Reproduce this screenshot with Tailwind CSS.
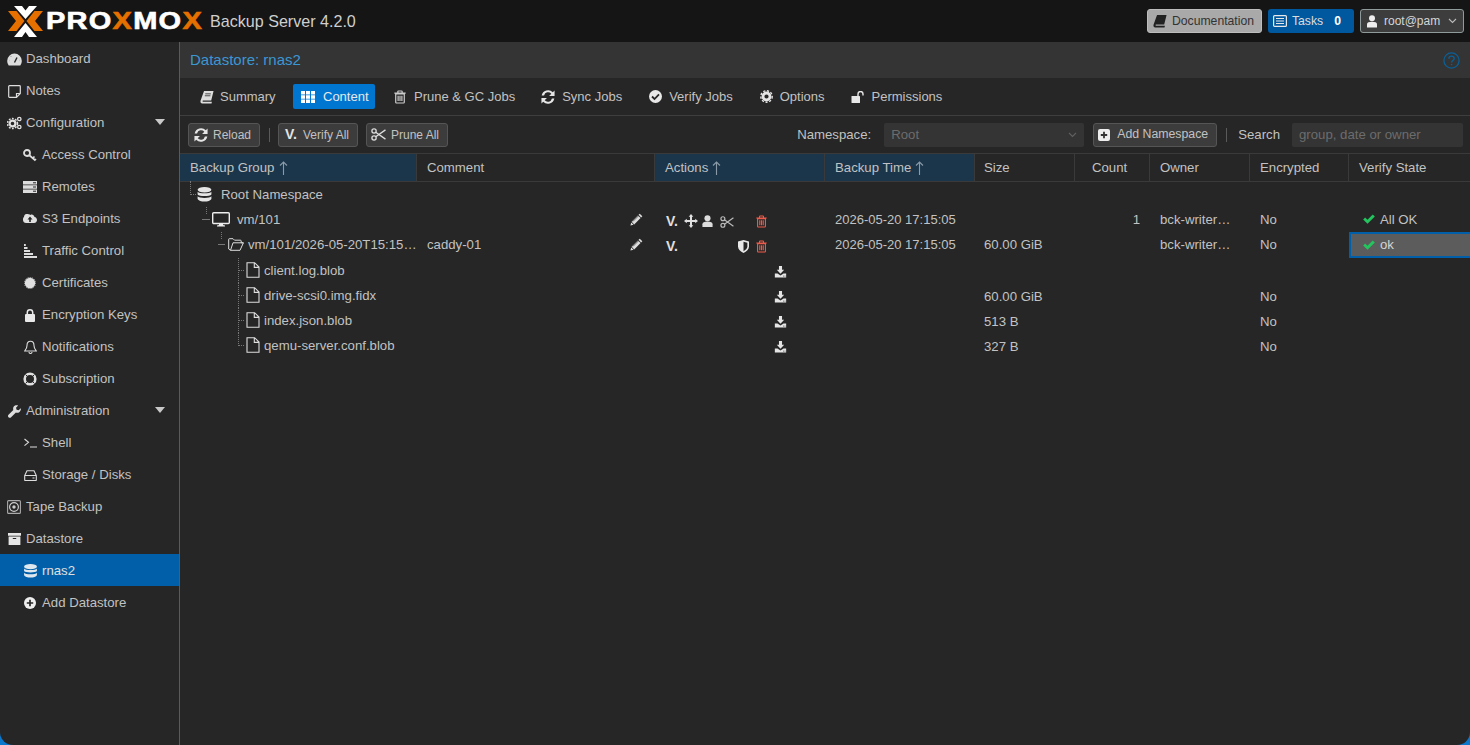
<!DOCTYPE html>
<html lang="en">
<head>
<meta charset="UTF-8">
<title>Proxmox Backup Server</title>
<script src="https://cdn.jsdelivr.net/npm/@tailwindcss/browser@4"></script>
</head>
<body class="bg-[#0a78cc] font-['Liberation_Sans',Arial,sans-serif] text-[13.2px] text-[#c2c2c2] antialiased overflow-hidden">
<svg class="hidden">
  <symbol id="sync" viewBox="1.8 1.6 12.4 12.8"><path d="M2.200 6.600A6 6 0 0 1 12.400 3.600L14 2v5H9l2-2a3.800 3.800 0 0 0-6.600 1.600zM13.800 9.400A6 6 0 0 1 3.600 12.400L2 14V9h5l-2 2a3.800 3.800 0 0 0 6.600-1.600z" fill="currentColor"/></symbol>
  <symbol id="book" viewBox="0 0 16 16"><path d="M4.600 1H15.500l-2.700 11.100H3.600c-1 0-1.100 1.400 0 1.400h10l-.4 1.800H2.600C1 15.300.2 13.800.6 12.200z" fill="currentColor"/><path d="M6 4.400h6.400M5.500 6.600h6.400" stroke="#262626" stroke-width=".9"/></symbol>
  <symbol id="trash" viewBox="0 0 14 16"><path d="M2 4.500h10V14a1 1 0 0 1-1 1H3a1 1 0 0 1-1-1zM.4 3.500h13.200M4.500 3.300V1.600c0-.4.3-.6.6-.6h3.800c.3 0 .6.200.6.600v1.700M4.800 6.500v6.300M7 6.500v6.300M9.200 6.500v6.300" fill="none" stroke="currentColor" stroke-width="1.400"/></symbol>
  <symbol id="scissors" viewBox="0 0 16 14"><g fill="none" stroke="currentColor" stroke-width="1.400"><circle cx="3.200" cy="3.200" r="2.300"/><circle cx="3.200" cy="10.800" r="2.300"/><path d="M5 4.500 15.500 12M5 9.500 15.500 2"/></g></symbol>
  <symbol id="pencil" viewBox="0 0 16 16"><path d="M12 .8 15.200 4l-1.500 1.500-3.200-3.200zM9.800 3 13 6.200 5.200 14 2 10.800zM1.500 11.600 4.400 14.500.5 15.500z" fill="currentColor"/><path d="m3.600 10.400 6.800-6.800" stroke="#262626" stroke-width=".8"/></symbol>
  <symbol id="download" viewBox="0 0 14 14"><path d="M5.200 0h3.600v4.400h2.500L7 9 2.700 4.400h2.500z" fill="currentColor"/><path d="M.4 8.800h3.100L7 11.200l3.500-2.400h3.100V13.500H.4z" fill="currentColor"/><path d="M10 11.800h.9M11.800 11.800h.9" stroke="#262626" stroke-width=".9"/></symbol>
  <symbol id="file" viewBox="0 0 14 16"><path d="M1 .7h7.600L13 5.100v10.200H1zM8.300 .9v4.500h4.500" fill="none" stroke="currentColor" stroke-width="1.100"/></symbol>
  <symbol id="db" viewBox="1 .4 14 15"><ellipse cx="8" cy="3.200" rx="6.900" ry="2.800" fill="currentColor"/><path d="M1.100 5.100C2.500 7.300 13.500 7.300 14.900 5.100V7.900C13.500 10 2.500 10 1.100 7.900zM1.100 9.700C2.500 11.900 13.500 11.900 14.900 9.700V12.400C13.500 15.800 2.500 15.800 1.100 12.400z" fill="currentColor"/></symbol>
  <symbol id="caret" viewBox="0 0 10 6"><path d="M0 0h10L5 6z" fill="currentColor"/></symbol>
  <symbol id="check" viewBox="0 0 14 12"><path d="M0 6.500 2.300 4.200 5.200 7 11.500 .6 14 3 5.200 11.800z" fill="currentColor"/></symbol>
  <symbol id="arrow" viewBox="0 0 9 14"><path d="M4.500 14V1M1 4.500 4.500 1 8 4.500" fill="none" stroke="#8a9aa8" stroke-width="1.100"/></symbol>
</svg>

<div class="w-[1470px] h-[745px] rounded-b-[13px] overflow-hidden bg-[#262626] flex flex-col">
  <!-- Top bar -->
  <header class="h-[42px] shrink-0 bg-[#151515] flex items-center">
    <svg class="ml-[8px] w-[35px] h-[31px] shrink-0" viewBox="0 0 35 31">
      <path d="M6 0h8l3.500 4.500L21 0h8L17.500 13zM6 31h8l3.500-5 3.500 5h8L17.500 17z" fill="#fff"/>
      <path d="M0 5h8.500l8 10-8 10H0l8-10zM35 5h-8.500l-8 10 8 10H35l-8-10z" fill="#e57000"/>
    </svg>
    <div class="w-[157px] ml-[3px] shrink-0 h-[26px]">
      <span class="inline-block origin-left scale-x-[1.26] text-[23px] leading-[26px] font-bold tracking-[1px] [-webkit-text-stroke:0.6px_currentColor] text-white whitespace-nowrap">PRO<span class="text-[#e57000]">X</span>MO<span class="text-[#e57000]">X</span></span>
    </div>
    <span class="ml-[7px] text-[16.1px] text-[#cfcfcf]">Backup Server 4.2.0</span>
    <div class="ml-auto flex items-center gap-[6px] pr-[6px]">
      <button class="w-[115px] h-[24px] rounded-[3px] bg-[#a9a9a9] border border-[#bdbdbd] flex items-center pl-[5px] text-[12.2px] text-[#333]">
        <svg class="w-[14px] h-[14px] mr-[5px] text-[#222]"><use href="#book"/></svg>Documentation
      </button>
      <button class="w-[86px] h-[24px] rounded-[3px] bg-[#00589f] flex items-center pl-[5px] text-[12.2px] text-[#ddd]">
        <svg class="w-[14px] h-[12px] mr-[5px]" viewBox="0 0 14 12"><rect x=".6" y=".6" width="12.800" height="10.800" rx="1" fill="none" stroke="#e8e8e8" stroke-width="1.200"/><path d="M3 3.500h8M3 6h8M3 8.500h8" stroke="#e8e8e8" stroke-width="1.200"/></svg>Tasks<span class="ml-[11px] font-bold text-white">0</span>
      </button>
      <button class="w-[104px] h-[24px] rounded-[3px] bg-[#3d3d3d] border border-[#8f9a9a] flex items-center pl-[6px] text-[12px] text-[#d5d5d5]">
        <svg class="w-[10px] h-[13px] mr-[7px]" viewBox="0 0 10 13"><circle cx="5" cy="3.200" r="3" fill="#eee"/><path d="M0 12.500V9.300C0 7.500 2 6.800 5 6.800s5 .7 5 2.500v3.200z" fill="#eee"/></svg>root@pam
        <svg class="w-[9px] h-[6px] ml-[8px]" viewBox="0 0 9 6"><path d="m1 1 3.500 3.500L8 1" fill="none" stroke="#bbb" stroke-width="1.100"/></svg>
      </button>
    </div>
  </header>

  <div class="flex flex-1 min-h-0">
    <!-- Sidebar -->
    <nav class="w-[180px] shrink-0 border-r border-[#5a5a5a] [&>a]:pt-[2px]">
      <a class="h-[32px] flex items-center pl-[7px]">
        <svg class="w-[15px] h-[13px] mr-[4px]" viewBox="0 0 15 13"><path d="M7.500 .5A7.300 7.300 0 0 0 .2 7.800c0 1.700.5 3.300 1.500 4.700h11.600c1-1.400 1.500-3 1.500-4.700A7.300 7.300 0 0 0 7.500 .5z" fill="#ddd"/><path d="m7.500 9.500 2.500-5M4 3.800v.1M2.600 7.500h.1M12.300 7.500h.1M7.500 2.700v.1" stroke="#262626" stroke-width="1.400" fill="none"/></svg>Dashboard</a>
      <a class="h-[32px] flex items-center pl-[8px]">
        <svg class="w-[13px] h-[13px] mr-[5px]" viewBox="0 0 13 13"><path d="M1.500 .7h10a.8.8 0 0 1 .8.8v7L8.500 12.300h-7a.8.8 0 0 1-.8-.8v-10a.8.8 0 0 1 .8-.8zM12 8.500H8.500V12" fill="none" stroke="#ddd" stroke-width="1.200"/></svg>Notes</a>
      <a class="h-[32px] flex items-center pl-[7px] relative">
        <svg class="w-[15px] h-[14px] mr-[4px]" viewBox="0 0 15 14"><circle cx="5.500" cy="7.500" r="2.900" fill="none" stroke="#e0e0e0" stroke-width="2.200"/><circle cx="5.500" cy="7.500" r="5" fill="none" stroke="#e0e0e0" stroke-width="1.500" stroke-dasharray="1.800 1.400"/><circle cx="12.300" cy="3" r="1.700" fill="none" stroke="#e0e0e0" stroke-width="1.300"/><circle cx="12.300" cy="11" r="1.700" fill="none" stroke="#e0e0e0" stroke-width="1.300"/></svg>Configuration
        <svg class="absolute left-[155px] top-[13px] w-[10px] h-[6px] text-[#c8c8c8]"><use href="#caret"/></svg></a>
      <a class="h-[32px] flex items-center pl-[23px]">
        <svg class="w-[14px] h-[13px] mr-[5px]" viewBox="0 0 14 13"><circle cx="4" cy="4" r="3" fill="none" stroke="#ddd" stroke-width="1.800"/><path d="m6 6 6.500 5.500M10 9l1.500-1.500M12 11l1-1" stroke="#ddd" stroke-width="1.700" fill="none"/></svg>Access Control</a>
      <a class="h-[32px] flex items-center pl-[23px]">
        <svg class="w-[14px] h-[12px] mr-[5px]" viewBox="0 0 14 12"><path d="M0 0h14v3.500H0zM0 4.200h14v3.600H0zM0 8.500h14V12H0z" fill="#ddd"/><path d="M10 1.800h3M10 6h3M10 10.200h3" stroke="#262626"/></svg>Remotes</a>
      <a class="h-[32px] flex items-center pl-[23px]">
        <svg class="w-[14px] h-[11px] mr-[5px]" viewBox="0 0 14 11"><path d="M3.500 0C1.800 0 1 1.500 1 3c-1 .5-1 1.500-1 3 0 2 1.500 3 3 3h8c2 0 3-1.500 3-3s-1-3-2.500-3C11 1 9 0 7.500 1 6.500.3 5 0 3.500 0z" fill="#e0e0e0"/><path d="M7 2.500 4.500 5.500h1.700V8h1.600V5.500h1.700z" fill="#262626"/></svg>S3 Endpoints</a>
      <a class="h-[32px] flex items-center pl-[24px]">
        <svg class="w-[13px] h-[14px] mr-[5px]" viewBox="0 0 13 14"><path d="M0 0h1.800v2H0zM0 3h3.500v2H0zM0 6h6v2H0zM0 9h9v2H0zM0 12h13v2H0z" fill="#ddd"/></svg>Traffic Control</a>
      <a class="h-[32px] flex items-center pl-[24px]">
        <svg class="w-[12px] h-[12px] mr-[6px]" viewBox="0 0 12 12"><circle cx="6" cy="6" r="5.200" fill="#e0e0e0"/><circle cx="6" cy="6" r="5.600" fill="none" stroke="#e0e0e0" stroke-width=".8" stroke-dasharray="1 1"/></svg>Certificates</a>
      <a class="h-[32px] flex items-center pl-[25px]">
        <svg class="w-[10px] h-[13px] mr-[7px]" viewBox="0 0 10 13"><rect y="5" width="10" height="8" rx="1" fill="#e8e8e8"/><path d="M2.300 5.500V3.500a2.700 2.700 0 0 1 5.400 0v2" fill="none" stroke="#e8e8e8" stroke-width="1.500"/></svg>Encryption Keys</a>
      <a class="h-[32px] flex items-center pl-[24px]">
        <svg class="w-[13px] h-[14px] mr-[5px]" viewBox="0 0 13 14"><path d="M6.500 1.200C4 1.200 3 3 3 5.500 3 8.500 1.500 10 .7 11h11.600c-.8-1-2.300-2.500-2.300-5.500 0-2.500-1-4.300-3.500-4.300zM5 12a1.500 1.500 0 0 0 3 0" fill="none" stroke="#ddd" stroke-width="1.100"/></svg>Notifications</a>
      <a class="h-[32px] flex items-center pl-[23px]">
        <svg class="w-[14px] h-[14px] mr-[5px]" viewBox="0 0 14 14"><circle cx="7" cy="7" r="5.300" fill="none" stroke="#e0e0e0" stroke-width="2.600"/><path d="m2.500 2.500 2.700 2.700M11.500 2.500 8.800 5.200M2.500 11.500l2.700-2.700M11.500 11.500 8.800 8.800" stroke="#262626" stroke-width="1"/></svg>Subscription</a>
      <a class="h-[32px] flex items-center pl-[8px] relative">
        <svg class="w-[13px] h-[13px] mr-[5px]" viewBox="0 0 13 13"><path d="M12.800 3.200 10.600 5.300 8.600 4.700 8 2.700 10.100.4C8.500-.2 6.700.2 5.800 1.500 5 2.600 5 3.900 5.300 5L.5 9.700c-.7.700-.7 1.900 0 2.600s1.900.7 2.600 0L7.900 7.600c1.200.4 2.600.2 3.600-.7 1.100-1 1.700-2.400 1.300-3.700z" fill="#ddd"/></svg>Administration
        <svg class="absolute left-[155px] top-[13px] w-[10px] h-[6px] text-[#c8c8c8]"><use href="#caret"/></svg></a>
      <a class="h-[32px] flex items-center pl-[24px]">
        <svg class="w-[13px] h-[10px] mr-[5px]" viewBox="0 0 13 10"><path d="m.5 1 4 3.300-4 3.300M6 9h7" fill="none" stroke="#ddd" stroke-width="1.100"/></svg>Shell</a>
      <a class="h-[32px] flex items-center pl-[24px]">
        <svg class="w-[13px] h-[11px] mr-[5px]" viewBox="0 0 13 11"><path d="M3 .7h7L12.300 5.500V10a.5.5 0 0 1-.5.5H1.200A.5.5 0 0 1 .7 10V5.500zM.7 5.500h11.600M8.500 8h2" fill="none" stroke="#ddd" stroke-width="1.100"/></svg>Storage / Disks</a>
      <a class="h-[32px] flex items-center pl-[7px]">
        <svg class="w-[14px] h-[14px] mr-[5px]" viewBox="0 0 14 14"><rect x=".6" y=".6" width="12.800" height="12.800" rx="1" fill="none" stroke="#aaa" stroke-width="1.100"/><circle cx="7" cy="7" r="4.400" fill="none" stroke="#ccc" stroke-width="1.200"/><circle cx="7" cy="7" r="1.700" fill="#ccc"/></svg>Tape Backup</a>
      <a class="h-[32px] flex items-center pl-[8px]">
        <svg class="w-[13px] h-[12px] mr-[5px]" viewBox="0 0 13 12"><path d="M0 0h13v2.800H0zM.6 3.600h11.800V12H.6z" fill="#e5e5e5"/><path d="M4.800 5.500h3.400" stroke="#262626" stroke-width="1.200"/></svg>Datastore</a>
      <a class="h-[32px] flex items-center pl-[24px] bg-[#005fa8] text-[#e0e0e0]">
        <svg class="w-[13px] h-[14px] mr-[5px] text-[#dfe7ee]"><use href="#db"/></svg>rnas2</a>
      <a class="h-[32px] flex items-center pl-[24px]">
        <svg class="w-[12px] h-[12px] mr-[6px]" viewBox="0 0 12 12"><circle cx="6" cy="6" r="6" fill="#eee"/><path d="M6 2.800v6.400M2.800 6h6.400" stroke="#262626" stroke-width="1.700"/></svg>Add Datastore</a>
    </nav>

    <main class="flex-1 min-w-0 flex flex-col">
      <!-- Title -->
      <div class="h-[36px] shrink-0 bg-[#343434] flex items-center justify-between pl-[10px] pr-[10px]">
        <span class="text-[15px] pt-[1px] text-[#3b97d3]">Datastore: rnas2</span>
        <svg class="w-[17px] h-[17px]" viewBox="0 0 17 17"><circle cx="8.500" cy="8.500" r="7.600" fill="none" stroke="#0a5f96" stroke-width="1.300"/><path d="M5.900 6.700C5.900 5 7 4.100 8.500 4.100s2.700.9 2.700 2.300c0 2.100-2.600 2-2.600 4.200M8.600 12v1.300" fill="none" stroke="#0a5f96" stroke-width="1.400"/></svg>
      </div>
      <!-- Tabs -->
      <div class="h-[38px] shrink-0 border-b border-[#3e3e3e] flex items-center pl-[13px] text-[13px]">
        <a class="h-[25px] w-[100px] flex items-center pl-[7px]"><svg class="w-[14px] h-[14px] mr-[6px] text-[#ddd]"><use href="#book"/></svg>Summary</a>
        <a class="h-[25px] w-[82px] flex items-center pl-[8px] rounded-[2px] bg-[#0076d0] text-[#e8e8e8]">
          <svg class="w-[14px] h-[12px] mr-[8px]" viewBox="0 0 14 12"><path d="M0 0h4v3.500H0zM5 0h4v3.500H5zM10 0h4v3.500h-4zM0 4.300h4v3.500H0zM5 4.300h4v3.500H5zM10 4.300h4v3.500h-4zM0 8.500h4V12H0zM5 8.500h4V12H5zM10 8.500h4V12h-4z" fill="#fff"/></svg>Content</a>
        <a class="h-[25px] ml-[19px] flex items-center"><svg class="w-[12px] h-[14px] mr-[8px] text-[#ccc]"><use href="#trash"/></svg>Prune &amp; GC Jobs</a>
        <a class="h-[25px] ml-[26px] flex items-center"><svg class="w-[14px] h-[14px] mr-[7px] text-[#e5e5e5]"><use href="#sync"/></svg>Sync Jobs</a>
        <a class="h-[25px] ml-[27px] flex items-center">
          <svg class="w-[13px] h-[13px] mr-[7px]" viewBox="0 0 13 13"><circle cx="6.500" cy="6.500" r="6.500" fill="#e8e8e8"/><path d="m3 6.500 2.500 2.500L10 4.300" fill="none" stroke="#262626" stroke-width="1.800"/></svg>Verify Jobs</a>
        <a class="h-[25px] ml-[27px] flex items-center">
          <svg class="w-[13px] h-[13px] mr-[7px]" viewBox="0 0 13 13"><circle cx="6.500" cy="6.500" r="3.500" fill="none" stroke="#e5e5e5" stroke-width="2.800"/><circle cx="6.500" cy="6.500" r="5.700" fill="none" stroke="#e5e5e5" stroke-width="1.400" stroke-dasharray="2.200 1.600"/></svg>Options</a>
        <a class="h-[25px] ml-[26px] flex items-center">
          <svg class="w-[14px] h-[12px] mr-[7px]" viewBox="0 0 13 12"><rect y="5" width="8.500" height="7" rx=".6" fill="#e8e8e8"/><path d="M6.500 5.500V3a2.500 2.500 0 0 1 5 0v1.500" fill="none" stroke="#e8e8e8" stroke-width="1.400"/></svg>Permissions</a>
      </div>
      <!-- Toolbar -->
      <div class="h-[37px] shrink-0 flex items-center pl-[8px] pr-[7px] text-[12px]">
        <button class="w-[72px] h-[24px] rounded-[3px] bg-[#3c3c3c] border border-[#555] flex items-center pl-[5px]"><svg class="w-[14px] h-[14px] mr-[5px] text-[#e5e5e5]"><use href="#sync"/></svg>Reload</button>
        <span class="w-px h-[14px] bg-[#5a5a5a] ml-[9px] mr-[8px]"></span>
        <button class="w-[80px] h-[24px] rounded-[3px] bg-[#3c3c3c] border border-[#555] flex items-center pl-[6px]"><span class="text-[14px] font-bold text-[#e5e5e5] mr-[6px]">V.</span>Verify All</button>
        <button class="w-[82px] h-[24px] ml-[8px] rounded-[3px] bg-[#3c3c3c] border border-[#555] flex items-center pl-[4px]"><svg class="w-[15px] h-[13px] mr-[5px] text-[#ddd]"><use href="#scissors"/></svg>Prune All</button>
        <span class="ml-auto text-[13.2px]">Namespace:</span>
        <div class="ml-[13px] w-[200px] h-[24px] rounded-[2px] bg-[#343434] flex items-center justify-between pl-[7px] pr-[7px] text-[13.2px] text-[#6c6c6c]">Root<svg class="w-[9px] h-[6px]" viewBox="0 0 9 6"><path d="m1 1 3.500 3.500L8 1" fill="none" stroke="#606060" stroke-width="1.100"/></svg></div>
        <button class="ml-[9px] w-[124px] h-[24px] rounded-[3px] bg-[#3c3c3c] border border-[#555] flex items-center pl-[4px] text-[12.3px]">
          <svg class="w-[12px] h-[12px] mr-[7px]" viewBox="0 0 12 12"><rect width="12" height="12" rx="2" fill="#eee"/><path d="M6 2.800v6.400M2.800 6h6.400" stroke="#333" stroke-width="1.800"/></svg>Add Namespace</button>
        <span class="w-px h-[14px] bg-[#5a5a5a] ml-[9px] mr-[11px]"></span>
        <span class="text-[13.2px]">Search</span>
        <div class="ml-[12px] w-[171px] h-[24px] rounded-[2px] bg-[#343434] flex items-center pl-[7px] text-[13.2px] text-[#6c6c6c]">group, date or owner</div>
      </div>
      <!-- Column header -->
      <div class="h-[29px] shrink-0 grid grid-cols-[237px_238px_170px_150px_100px_75px_100px_99px_121px] border-y border-[#3a3a3a]">
        <div class="bg-[#1b364b] border-r border-[#3a3a3a] flex items-center pl-[10px]">Backup Group<svg class="w-[9px] h-[14px] ml-[5px]"><use href="#arrow"/></svg></div>
        <div class="border-r border-[#3a3a3a] flex items-center pl-[10px]">Comment</div>
        <div class="bg-[#1b364b] border-r border-[#3a3a3a] flex items-center pl-[10px]">Actions<svg class="w-[9px] h-[14px] ml-[4px]"><use href="#arrow"/></svg></div>
        <div class="bg-[#1b364b] border-r border-[#3a3a3a] flex items-center pl-[10px]">Backup Time<svg class="w-[9px] h-[14px] ml-[4px]"><use href="#arrow"/></svg></div>
        <div class="border-r border-[#3a3a3a] flex items-center pl-[9px]">Size</div>
        <div class="border-r border-[#3a3a3a] flex items-center pl-[17px]">Count</div>
        <div class="border-r border-[#3a3a3a] flex items-center pl-[10px]">Owner</div>
        <div class="border-r border-[#3a3a3a] flex items-center pl-[10px]">Encrypted</div>
        <div class="flex items-center pl-[10px]">Verify State</div>
      </div>
      <!-- Rows -->
      <div>
        <div class="h-[25px] pt-[1px] grid grid-cols-[237px_238px_170px_150px_100px_75px_100px_99px_121px] items-center">
          <div class="flex items-center pl-[17px] relative">
            <span class="absolute left-[10px] top-[-4px] w-[6px] h-[14px] border-l border-b border-dotted border-[#777]"></span>
            <svg class="w-[15px] h-[15px] shrink-0 text-[#e5e5e5]"><use href="#db"/></svg><span class="ml-[9px]">Root Namespace</span></div>
        </div>
        <div class="h-[25px] grid grid-cols-[237px_238px_170px_150px_100px_75px_100px_99px_121px] items-center relative">
          <span class="absolute left-[26px] top-0 h-[7px] border-l border-dotted border-[#777]"></span>
          <div class="flex items-center pl-[22px]">
            <span class="w-[8px] h-px bg-[#777]"></span>
            <svg class="w-[18px] h-[15px] shrink-0 ml-[2px]" viewBox="0 0 18 15"><rect x=".7" y=".7" width="16.600" height="10.800" rx="1" fill="#262626" stroke="#eee" stroke-width="1.400"/><path d="M5 14.500h8v-1l-2-.5V11H7v2l-2 .5z" fill="#eee"/></svg><span class="ml-[7px]">vm/101</span></div>
          <div class="flex justify-end pr-[12px]"><svg class="w-[13px] h-[13px] text-[#ddd]"><use href="#pencil"/></svg></div>
          <div class="flex items-center pl-[11px] pt-[3px] relative h-full">
            <span class="font-bold text-[14px] text-[#e0e0e0]">V.</span>
            <svg class="absolute left-[29px] top-[7px] w-[14px] h-[14px]" viewBox="0 0 14 14"><path d="M7 0 9.300 2.800H8V6h3.200V4.700L14 7l-2.800 2.300V8H8v3.200h1.300L7 14l-2.300-2.800H6V8H2.800v1.300L0 7l2.800-2.300V6H6V2.800H4.700z" fill="#e0e0e0"/></svg>
            <svg class="absolute left-[47px] top-[8px] w-[11px] h-[12px]" viewBox="0 0 11 13"><circle cx="5.500" cy="3.500" r="3.300" fill="#ddd"/><path d="M0 13V10C0 8 2 7 5.500 7S11 8 11 10v3z" fill="#ddd"/></svg>
            <svg class="absolute left-[65px] top-[9px] w-[14px] h-[12px] text-[#bbb]"><use href="#scissors"/></svg>
            <svg class="absolute left-[101px] top-[8px] w-[11px] h-[13px] text-[#ef5a4a]"><use href="#trash"/></svg>
          </div>
          <div class="pl-[10px] text-[13px]">2026-05-20 17:15:05</div>
          <div></div>
          <div class="text-right pr-[10px]">1</div>
          <div class="pl-[10px]">bck-writer…</div>
          <div class="pl-[10px]">No</div>
          <div class="flex items-center pl-[14px]"><svg class="w-[12px] h-[10px] mr-[5px] text-[#22c55e]"><use href="#check"/></svg>All OK</div>
        </div>
        <div class="h-[26px] pb-[1px] grid grid-cols-[237px_238px_170px_150px_100px_75px_100px_99px_121px] items-center relative">
          <span class="absolute left-[41px] top-0 h-[7px] border-l border-dotted border-[#777]"></span>
          <div class="flex items-center pl-[38px]">
            <span class="w-[7px] h-px bg-[#777]"></span>
            <svg class="w-[16px] h-[13px] shrink-0 ml-[3px]" viewBox="0 0 16 13"><path d="M2.500 12.300h9.500L15.400 4.800H13.200V3a.8.800 0 0 0-.8-.8H6.500L5 .7H1.300a.6.600 0 0 0-.6.600V11zM2.500 12.300 5 4.800h10.400" fill="none" stroke="#ddd" stroke-width="1"/></svg><span class="ml-[4px] whitespace-nowrap">vm/101/2026-05-20T15:15…</span></div>
          <div class="pl-[10px] flex items-center justify-between pr-[12px]">caddy-01<svg class="w-[13px] h-[13px] text-[#ddd]"><use href="#pencil"/></svg></div>
          <div class="flex items-center pl-[11px] pt-[3px] relative h-full">
            <span class="font-bold text-[14px] text-[#e0e0e0]">V.</span>
            <svg class="absolute left-[83px] top-[8px] w-[11px] h-[13px]" viewBox="0 0 12 14"><path d="M0 1.500 6 0l6 1.500v5.500c0 3.200-2.700 5.700-6 7-3.300-1.300-6-3.800-6-7z" fill="#e8e8e8"/><path d="M6 1.800 10.200 3v4c0 2.300-2.200 4.100-4.200 5.100z" fill="#262626"/></svg>
            <svg class="absolute left-[101px] top-[8px] w-[11px] h-[13px] text-[#ef5a4a]"><use href="#trash"/></svg>
          </div>
          <div class="pl-[10px] text-[13px]">2026-05-20 17:15:05</div>
          <div class="pl-[9px]">60.00 GiB</div>
          <div></div>
          <div class="pl-[10px]">bck-writer…</div>
          <div class="pl-[10px]">No</div>
          <div class="h-[26px] self-start flex items-center pl-[12px] bg-[#5c5c5c] border-2 border-[#005fa8] border-r-0 text-[#d5d5d5]"><svg class="w-[12px] h-[10px] mr-[5px] text-[#22c55e]"><use href="#check"/></svg>ok</div>
        </div>
        <div class="h-[25px] grid grid-cols-[237px_238px_170px_150px_100px_75px_100px_99px_121px] items-center relative">
          <span class="absolute left-[58px] top-0 h-[25px] border-l border-dotted border-[#777]"></span>
          <span class="absolute left-[59px] top-[12px] w-[5px] border-t border-dotted border-[#777]"></span>
          <div class="flex items-center pl-[66px]"><svg class="w-[14px] h-[16px] shrink-0 text-[#ddd]"><use href="#file"/></svg><span class="ml-[4px]">client.log.blob</span></div>
          <div></div>
          <div class="pl-[119px] pt-[3px]"><svg class="block w-[13px] h-[12px] text-[#e5e5e5]"><use href="#download"/></svg></div>
        </div>
        <div class="h-[25px] grid grid-cols-[237px_238px_170px_150px_100px_75px_100px_99px_121px] items-center relative">
          <span class="absolute left-[58px] top-0 h-[25px] border-l border-dotted border-[#777]"></span>
          <span class="absolute left-[59px] top-[12px] w-[5px] border-t border-dotted border-[#777]"></span>
          <div class="flex items-center pl-[66px]"><svg class="w-[14px] h-[16px] shrink-0 text-[#ddd]"><use href="#file"/></svg><span class="ml-[4px]">drive-scsi0.img.fidx</span></div>
          <div></div>
          <div class="pl-[119px] pt-[3px]"><svg class="block w-[13px] h-[12px] text-[#e5e5e5]"><use href="#download"/></svg></div>
          <div></div>
          <div class="pl-[9px] pt-[2px]">60.00 GiB</div>
          <div></div><div></div>
          <div class="pl-[10px] pt-[2px]">No</div>
        </div>
        <div class="h-[25px] grid grid-cols-[237px_238px_170px_150px_100px_75px_100px_99px_121px] items-center relative">
          <span class="absolute left-[58px] top-0 h-[25px] border-l border-dotted border-[#777]"></span>
          <span class="absolute left-[59px] top-[12px] w-[5px] border-t border-dotted border-[#777]"></span>
          <div class="flex items-center pl-[66px]"><svg class="w-[14px] h-[16px] shrink-0 text-[#ddd]"><use href="#file"/></svg><span class="ml-[4px]">index.json.blob</span></div>
          <div></div>
          <div class="pl-[119px] pt-[3px]"><svg class="block w-[13px] h-[12px] text-[#e5e5e5]"><use href="#download"/></svg></div>
          <div></div>
          <div class="pl-[9px] pt-[2px]">513 B</div>
          <div></div><div></div>
          <div class="pl-[10px] pt-[2px]">No</div>
        </div>
        <div class="h-[25px] grid grid-cols-[237px_238px_170px_150px_100px_75px_100px_99px_121px] items-center relative">
          <span class="absolute left-[58px] top-0 h-[13px] w-[6px] border-l border-b border-dotted border-[#777]"></span>
          <div class="flex items-center pl-[66px]"><svg class="w-[14px] h-[16px] shrink-0 text-[#ddd]"><use href="#file"/></svg><span class="ml-[4px]">qemu-server.conf.blob</span></div>
          <div></div>
          <div class="pl-[119px] pt-[3px]"><svg class="block w-[13px] h-[12px] text-[#e5e5e5]"><use href="#download"/></svg></div>
          <div></div>
          <div class="pl-[9px] pt-[2px]">327 B</div>
          <div></div><div></div>
          <div class="pl-[10px] pt-[2px]">No</div>
        </div>
      </div>
    </main>
  </div>
</div>
</body>
</html>
